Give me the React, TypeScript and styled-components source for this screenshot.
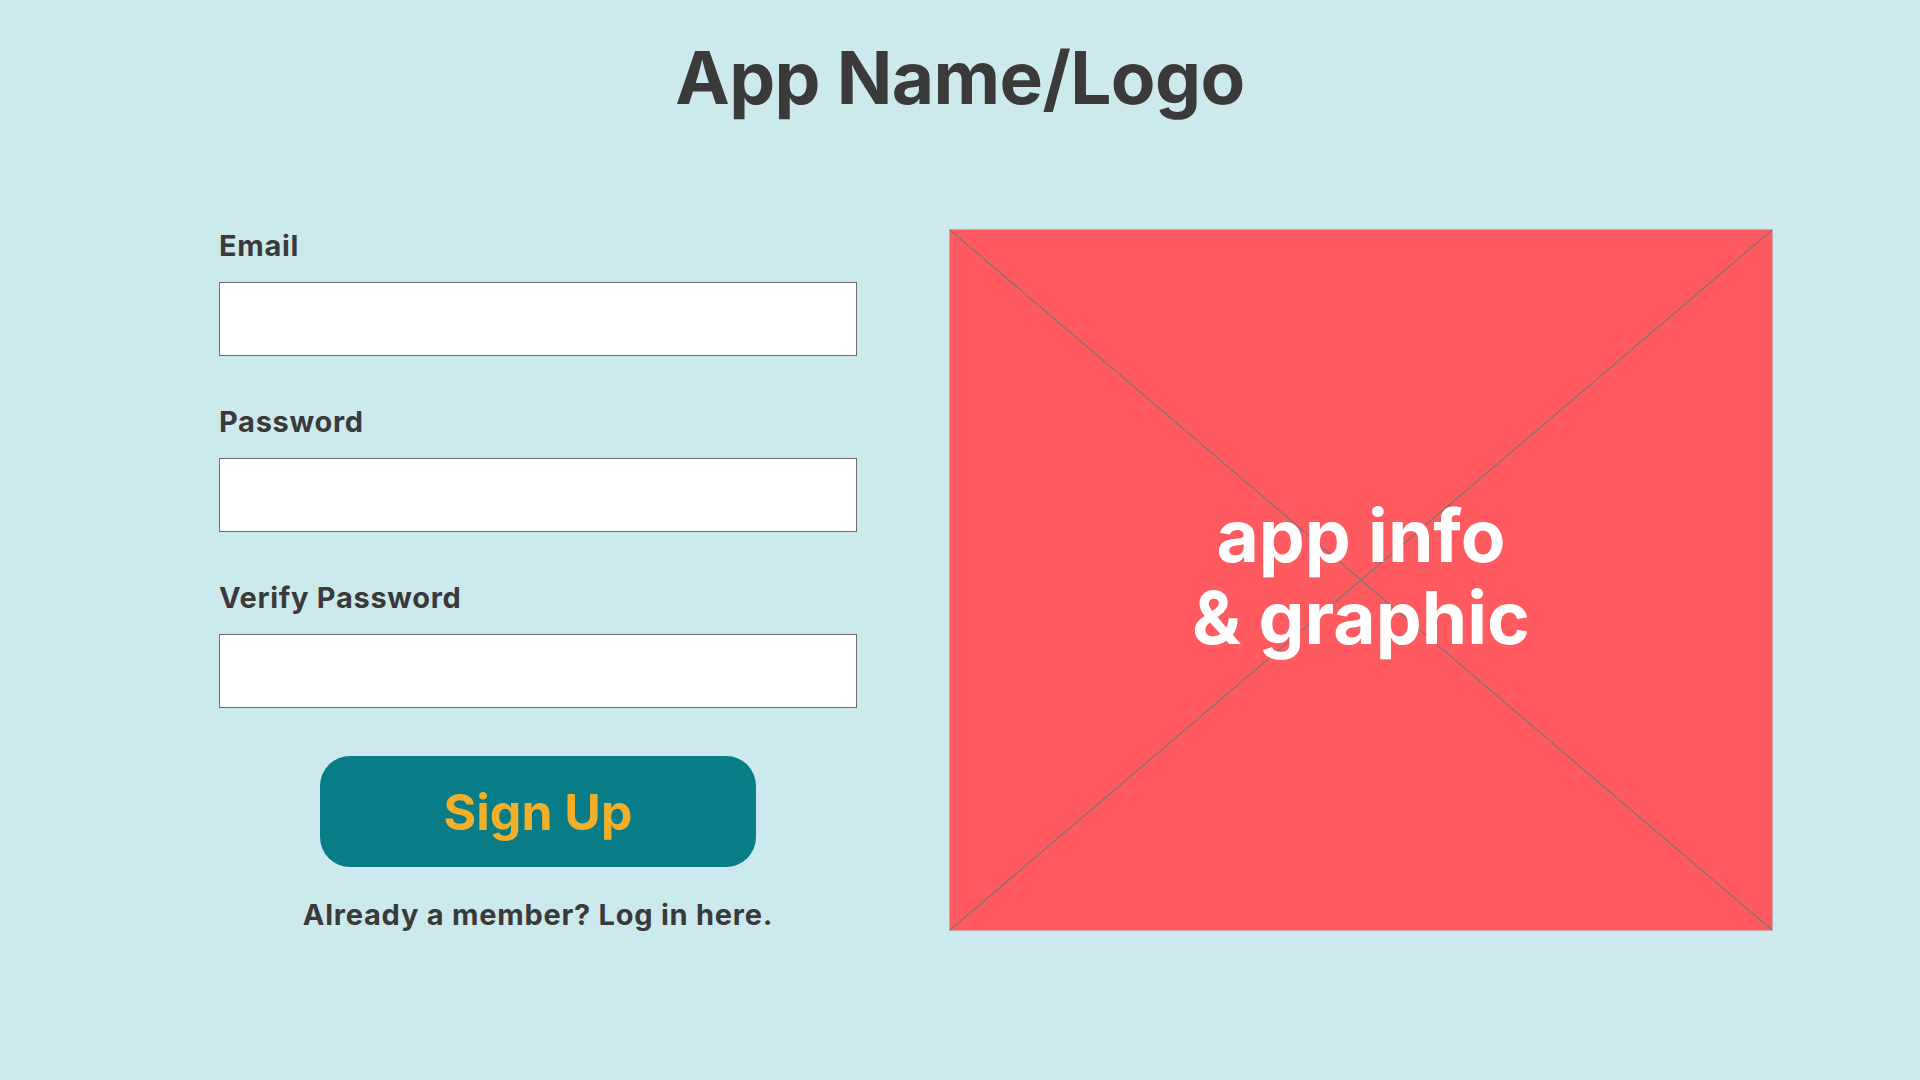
import styled, { createGlobalStyle } from "styled-components";

const GlobalStyle = createGlobalStyle`
  html, body {
    margin: 0;
    padding: 0;
  }
  body {
    background-color: #cce9ed;
    font-family: Inter, "Open Sans", sans-serif;
    color: #3a3a3a;
  }
`;

const Page = styled.div`
  min-height: 100vh;
  display: flex;
  flex-direction: column;
  background-color: #cce9ed;
`;

const Title = styled.h1`
  margin: 41px 0 0;
  font-size: 73px;
  line-height: 74px;
  font-weight: 700;
  letter-spacing: -0.6px;
  text-align: center;
  color: #3a3a3a;
`;

const Content = styled.div`
  display: grid;
  grid-template-columns: 638px 824px;
  column-gap: 92px;
  align-items: start;
  margin-top: 114px;
  padding-left: 219px;
`;

const SignUpForm = styled.form`
  display: flex;
  flex-direction: column;
  gap: 50px;
  padding-top: 1px;
`;

const Field = styled.div`
  display: flex;
  flex-direction: column;
  gap: 20px;
`;

const Label = styled.label`
  font-size: 29px;
  line-height: 32px;
  font-weight: 700;
  letter-spacing: 0.7px;
  color: #3a3a3a;
`;

const Input = styled.input`
  box-sizing: border-box;
  width: 100%;
  height: 74px;
  margin: 0;
  padding: 0 16px;
  border: 1px solid #6e6e6e;
  background-color: #ffffff;
  font-size: 24px;
  font-family: inherit;
  outline: none;
`;

const Actions = styled.div`
  display: flex;
  flex-direction: column;
  align-items: center;
  gap: 32px;
  margin-top: -2px;
`;

const SignUpButton = styled.button`
  width: 436px;
  height: 111px;
  border: none;
  border-radius: 30px;
  background-color: #087d87;
  color: #f2af29;
  font-family: inherit;
  font-size: 50px;
  font-weight: 700;
  cursor: pointer;
`;

const LoginLink = styled.a`
  font-size: 29px;
  line-height: 32px;
  font-weight: 700;
  letter-spacing: 0.75px;
  color: #3a3a3a;
  text-decoration: none;
  cursor: pointer;
`;

const Placeholder = styled.div`
  position: relative;
  box-sizing: border-box;
  width: 824px;
  height: 702px;
  background-color: #ff5a5f;
  border: 1px solid #c9a5a5;
  display: flex;
  align-items: center;
  justify-content: center;
`;

const Cross = styled.svg`
  position: absolute;
  inset: 0;
  width: 100%;
  height: 100%;
`;

const PlaceholderText = styled.div`
  position: relative;
  margin-top: -7px;
  font-size: 73px;
  line-height: 82px;
  font-weight: 700;
  color: #ffffff;
  text-align: center;
`;

export default function App() {
  return (
    <>
      <GlobalStyle />
      <Page>
        <Title>App Name/Logo</Title>
        <Content>
          <SignUpForm onSubmit={(e) => e.preventDefault()}>
            <Field>
              <Label htmlFor="email">Email</Label>
              <Input id="email" type="email" />
            </Field>
            <Field>
              <Label htmlFor="password">Password</Label>
              <Input id="password" type="password" />
            </Field>
            <Field>
              <Label htmlFor="verify">Verify Password</Label>
              <Input id="verify" type="password" />
            </Field>
            <Actions>
              <SignUpButton type="submit">Sign Up</SignUpButton>
              <LoginLink>Already a member? Log in here.</LoginLink>
            </Actions>
          </SignUpForm>
          <Placeholder>
            <Cross viewBox="0 0 822 700" preserveAspectRatio="none">
              <line x1="0" y1="0" x2="822" y2="700" stroke="#777777" strokeWidth="1.2" />
              <line x1="822" y1="0" x2="0" y2="700" stroke="#777777" strokeWidth="1.2" />
            </Cross>
            <PlaceholderText>
              app info
              <br />& graphic
            </PlaceholderText>
          </Placeholder>
        </Content>
      </Page>
    </>
  );
}
